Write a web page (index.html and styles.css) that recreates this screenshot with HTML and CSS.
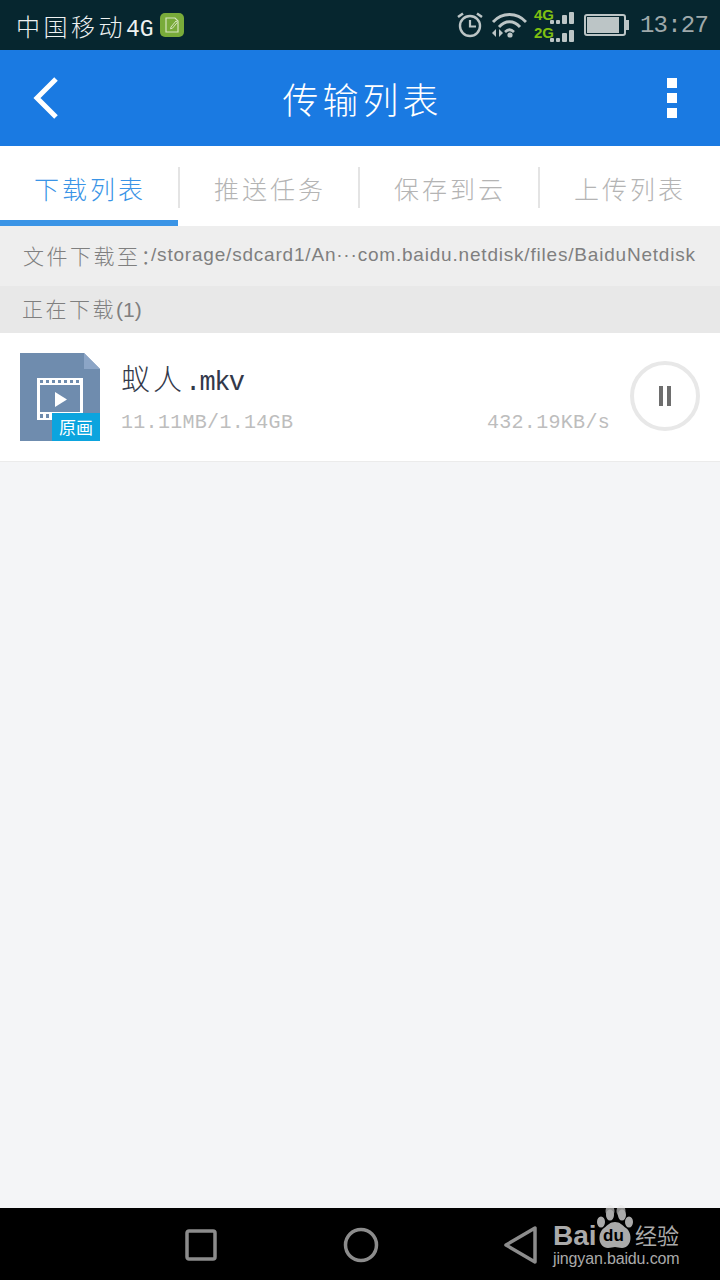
FILE: index.html
```html
<!DOCTYPE html>
<html lang="zh-CN">
<head>
  <meta charset="UTF-8" />
  <meta name="viewport" content="width=device-width, initial-scale=1.0"/>
  <title>传输列表</title>
  <link rel="stylesheet" href="styles.css">
</head>
<body>
  <div class="phone">
    <div class="status-bar">
      <div class="carrier">
        <span>中国移动<span class="carrier-net">4G</span></span>
        <svg class="note-icon" width="24" height="24" viewBox="0 0 24 24">
          <rect width="24" height="24" rx="5" fill="#79ab3a"/>
          <path d="M6 5h9l3 3v11H6z" fill="none" stroke="#d5e4bd" stroke-width="1.2"/>
          <path d="M11 14l5-6 1.5 1.2-5 6-2 .6z" fill="#79ab3a" stroke="#d5e4bd" stroke-width="1"/>
        </svg>
      </div>
      <div class="status-icons">
        <svg width="28" height="28" viewBox="0 0 28 28" fill="none" stroke="#bcc5c6">
          <circle cx="14" cy="15" r="10" stroke-width="2.4"/>
          <path d="M14 9v6.500h6" stroke-width="2.2"/>
          <path d="M2 6l5-3.500M26 6l-5-3.500" stroke-width="2.600"/>
        </svg>
        <svg width="36" height="28" viewBox="0 0 36 28" fill="none" stroke="#bcc5c6">
          <path d="M2 11C11 1 26 1 35 11" stroke-width="2.800"/>
          <path d="M8 16C14 9 23 9 29 16" stroke-width="2.800"/>
          <path d="M14 21C17 18 20 18 23 21" stroke-width="2.600"/>
          <circle cx="19" cy="24" r="2.600" fill="#bcc5c6" stroke="none"/>
          <path d="M1 22l4-4v8zM8 18l4 4-4 4z" fill="#bcc5c6" stroke="none"/>
        </svg>
        <div class="signal">
          <div class="signal-row">
            <span class="net-label">4G</span>
            <svg width="24" height="12" viewBox="0 0 24 12" fill="#bcc5c6">
              <rect x="0" y="8" width="4" height="4" rx="1"/>
              <rect x="6" y="8" width="4" height="4" rx="1"/>
              <rect x="12" y="3" width="5" height="9" rx="1"/>
              <rect x="19" y="0" width="5" height="12" rx="1"/>
            </svg>
          </div>
          <div class="signal-row">
            <span class="net-label">2G</span>
            <svg width="24" height="12" viewBox="0 0 24 12" fill="#bcc5c6">
              <rect x="0" y="8" width="4" height="4" rx="1"/>
              <rect x="6" y="8" width="4" height="4" rx="1"/>
              <rect x="12" y="3" width="5" height="9" rx="1"/>
              <rect x="19" y="0" width="5" height="12" rx="1"/>
            </svg>
          </div>
        </div>
        <svg class="battery" width="46" height="24" viewBox="0 0 46 24">
          <rect x="1" y="2" width="40" height="20" rx="2" fill="none" stroke="#bcc5c6" stroke-width="2"/>
          <rect x="3" y="4" width="32" height="16" fill="#bcc5c6"/>
          <rect x="42" y="7" width="3" height="10" fill="#bcc5c6"/>
        </svg>
        <span class="clock">13:27</span>
      </div>
    </div>

    <header class="app-bar">
      <svg class="back" width="30" height="44" viewBox="0 0 30 44" fill="none" stroke="#fff" stroke-width="5">
        <path d="M25 3L6 22l19 19"/>
      </svg>
      <h1>传输列表</h1>
      <div class="more"><i></i><i></i><i></i></div>
    </header>

    <nav class="tabs">
      <a class="tab active">下载列表</a>
      <a class="tab">推送任务</a>
      <a class="tab">保存到云</a>
      <a class="tab">上传列表</a>
    </nav>

    <div class="path-row">
      <span class="path-label">文件下载至：</span><span class="path-value">/storage/sdcard1/An···com.baidu.netdisk/files/BaiduNetdisk</span>
    </div>
    <div class="section-head">正在下载<span class="section-count">(1)</span></div>

    <div class="file-row">
      <div class="file-icon">
        <svg width="80" height="88" viewBox="0 0 80 88">
          <path d="M0 0h64l16 16v72H0z" fill="#6f8cae"/>
          <path d="M64 0l16 16-16 0z" fill="#8ca5c6"/>
          <rect x="17" y="25" width="46" height="42" fill="#fff"/>
          <rect x="20" y="32" width="40" height="27" fill="#6f8cae"/>
          <path d="M20 27h3v3h-3zM26 27h3v3h-3zM32 27h3v3h-3zM38 27h3v3h-3zM44 27h3v3h-3zM50 27h3v3h-3zM56 27h3v3h-3zM20 61h3v4h-3zM26 61h3v4h-3z" fill="#6f8cae"/>
          <path d="M35 39l12 7.500-12 7.500z" fill="#fff"/>
        </svg>
        <span class="file-badge">原画</span>
      </div>
      <div class="file-info">
        <div class="file-name">蚁人<span class="file-ext">.mkv</span></div>
        <div class="file-meta">
          <span>11.11MB/1.14GB</span>
          <span>432.19KB/s</span>
        </div>
      </div>
      <button class="pause"><i></i><i></i></button>
    </div>

    <div class="empty"></div>

    <div class="nav-bar">
      <svg width="32" height="32" viewBox="0 0 32 32" fill="none" stroke="#8c8c8c" stroke-width="3.500">
        <rect x="2" y="2" width="28" height="28" rx="2"/>
      </svg>
      <svg width="36" height="36" viewBox="0 0 36 36" fill="none" stroke="#8c8c8c" stroke-width="3.500">
        <circle cx="18" cy="18" r="15.500"/>
      </svg>
      <svg width="34" height="38" viewBox="0 0 34 38" fill="none" stroke="#8c8c8c" stroke-width="3.500" stroke-linejoin="round">
        <path d="M31 2v34L2 19z"/>
      </svg>
    </div>

    <div class="watermark">
      <span class="wm-bai">Bai</span>
      <svg class="wm-paw" width="38" height="46" viewBox="0 0 38 46">
        <ellipse cx="14" cy="7" rx="4.500" ry="6" fill="#e8e8e8" fill-opacity=".6"/>
        <ellipse cx="25" cy="7" rx="4.500" ry="6" fill="#e8e8e8" fill-opacity=".6"/>
        <ellipse cx="5" cy="18" rx="4" ry="5.500" fill="#aaa"/>
        <ellipse cx="14" cy="11" rx="4" ry="5.500" fill="#aaa"/>
        <ellipse cx="26" cy="11" rx="4" ry="5.500" fill="#aaa"/>
        <ellipse cx="33" cy="18" rx="4" ry="5.500" fill="#aaa"/>
        <path d="M19 18c5 0 7 3 11 6 7 5 6 20-4 20-3 0-5-1-7-1s-4 1-7 1c-10 0-11-15-4-20 4-3 6-6 11-6z" fill="#aaa"/>
      </svg>
      <span class="wm-du">du</span>
      <span class="wm-cn">经验</span>
      <span class="wm-url">jingyan.baidu.com</span>
    </div>
  </div>
</body>
</html>
```

FILE: styles.css
```css
* {
  box-sizing: border-box;
}
body {
  margin: 0;
  font-family: "Noto Sans CJK SC", "Liberation Sans", sans-serif;
  background: #f4f5f7;
}
.phone {
  position: relative;
  display: flex;
  flex-direction: column;
  width: 720px;
  height: 1280px;
  overflow: hidden;
}

/* status bar */
.status-bar {
  display: flex;
  justify-content: space-between;
  align-items: center;
  height: 50px;
  padding: 0 12px 0 16px;
  background: #06262f;
  color: #eef2f2;
}
.carrier {
  display: flex;
  align-items: center;
  gap: 6px;
  font-size: 24px;
  font-weight: 300;
  letter-spacing: 3.5px;
}
.carrier-net {
  font-family: "Liberation Mono", monospace;
  letter-spacing: 0;
  font-size: 23px;
}
.status-icons {
  display: flex;
  align-items: center;
  gap: 7px;
}
.signal {
  display: flex;
  flex-direction: column;
  gap: 2px;
}
.signal-row {
  display: flex;
  align-items: flex-end;
  height: 16px;
}
.net-label {
  width: 16px;
  font-family: "Liberation Sans", sans-serif;
  font-size: 15px;
  font-weight: bold;
  line-height: 13px;
  color: #7fbf12;
  align-self: flex-start;
}
.battery {
  margin-left: 3px;
}
.clock {
  margin-left: 3px;
  font-family: "Liberation Mono", monospace;
  font-size: 24px;
  letter-spacing: -.8px;
  color: #9fa9ab;
}

/* app bar */
.app-bar {
  display: flex;
  justify-content: space-between;
  align-items: center;
  height: 96px;
  padding: 0 43px 0 31px;
  background: #1a7ae2;
  color: #fff;
}
.app-bar h1 {
  margin: 0 0 0 -3px;
  font-size: 36px;
  font-weight: 300;
  letter-spacing: 4px;
}
.more {
  display: flex;
  flex-direction: column;
  gap: 5px;
}
.more i {
  display: block;
  width: 10px;
  height: 10px;
  background: #fff;
}

/* tabs */
.tabs {
  display: flex;
  height: 80px;
  background: #fff;
}
.tab {
  position: relative;
  flex: 1;
  padding-top: 21px;
  font-size: 25px;
  font-weight: 300;
  line-height: 42px;
  letter-spacing: 3px;
  text-align: center;
  color: #b4b4b4;
}
.tab + .tab::before {
  content: "";
  position: absolute;
  left: -2px;
  top: 21px;
  width: 2px;
  height: 41px;
  background: #e4e4e4;
}
.tab.active {
  color: #3a94e6;
}
.tab.active::after {
  content: "";
  position: absolute;
  left: 0;
  bottom: 0;
  width: 178px;
  height: 6px;
  background: #3a94e6;
}

/* info rows */
.path-row {
  display: flex;
  align-items: center;
  height: 60px;
  padding: 0 0 2px 23px;
  background: #eeeeee;
  color: #7f7f7f;
  white-space: nowrap;
}
.path-label {
  width: 128px;
  font-size: 21px;
  font-weight: 300;
  letter-spacing: 2.5px;
}
.path-value {
  font-family: "Liberation Sans", sans-serif;
  font-size: 19px;
  letter-spacing: .8px;
}
.section-head {
  height: 47px;
  padding-left: 22px;
  background: #e8e8e8;
  font-size: 21px;
  font-weight: 300;
  line-height: 44px;
  letter-spacing: 2.5px;
  color: #7f7f7f;
}
.section-count {
  font-family: "Liberation Sans", sans-serif;
  letter-spacing: 0;
}

/* file row */
.file-row {
  display: flex;
  align-items: center;
  height: 129px;
  padding: 0 20px;
  background: #fff;
  border-bottom: 1px solid #ebebeb;
}
.file-icon {
  position: relative;
  width: 80px;
  height: 88px;
}
.file-icon svg {
  display: block;
}
.file-badge {
  position: absolute;
  right: 0;
  bottom: 0;
  width: 48px;
  height: 28px;
  background: #0ca4de;
  color: #fff;
  font-size: 17px;
  line-height: 28px;
  text-align: center;
}
.file-info {
  flex: 1;
  margin: -3px 20px 0 21px;
}
.file-name {
  font-size: 29px;
  font-weight: 300;
  line-height: 40px;
  letter-spacing: 3px;
  color: #33394a;
}
.file-ext {
  font-family: "Liberation Mono", monospace;
  font-size: 27px;
  letter-spacing: -1.6px;
}
.file-meta {
  display: flex;
  justify-content: space-between;
  margin-top: 8px;
  font-family: "Liberation Mono", monospace;
  font-size: 20px;
  line-height: 24px;
  letter-spacing: .3px;
  color: #bdbdbd;
}
.pause {
  display: flex;
  justify-content: center;
  align-items: center;
  gap: 4px;
  width: 70px;
  height: 70px;
  margin-top: -3px;
  padding: 0;
  border: 4px solid #e8e8e8;
  border-radius: 50%;
  background: #fff;
}
.pause i {
  display: block;
  width: 4px;
  height: 20px;
  background: #6e6e6e;
}

.empty {
  flex: 1;
}

/* nav bar */
.nav-bar {
  display: grid;
  grid-template-columns: repeat(3, 160px);
  justify-items: center;
  align-items: center;
  height: 72px;
  padding: 2px 0 0 121px;
  background: #000;
}

/* watermark */
.watermark {
  position: absolute;
  left: 553px;
  top: 1203px;
  width: 130px;
  height: 66px;
  color: #aaa;
}
.watermark span {
  position: absolute;
  font-family: "Liberation Sans", sans-serif;
  white-space: nowrap;
}
.wm-bai {
  left: 0;
  top: 17px;
  font-size: 28px;
  font-weight: bold;
  line-height: 32px;
}
.wm-paw {
  position: absolute;
  left: 43px;
  top: 1px;
}
.watermark .wm-du {
  left: 50px;
  top: 23px;
  font-size: 17px;
  font-weight: bold;
  line-height: 20px;
  color: #000;
}
.watermark .wm-cn {
  left: 82px;
  top: 18px;
  font-family: "Noto Sans CJK SC", sans-serif;
  font-size: 22px;
  line-height: 26px;
}
.wm-url {
  left: 0;
  top: 46px;
  font-size: 16px;
  line-height: 20px;
  letter-spacing: -.15px;
}
```
